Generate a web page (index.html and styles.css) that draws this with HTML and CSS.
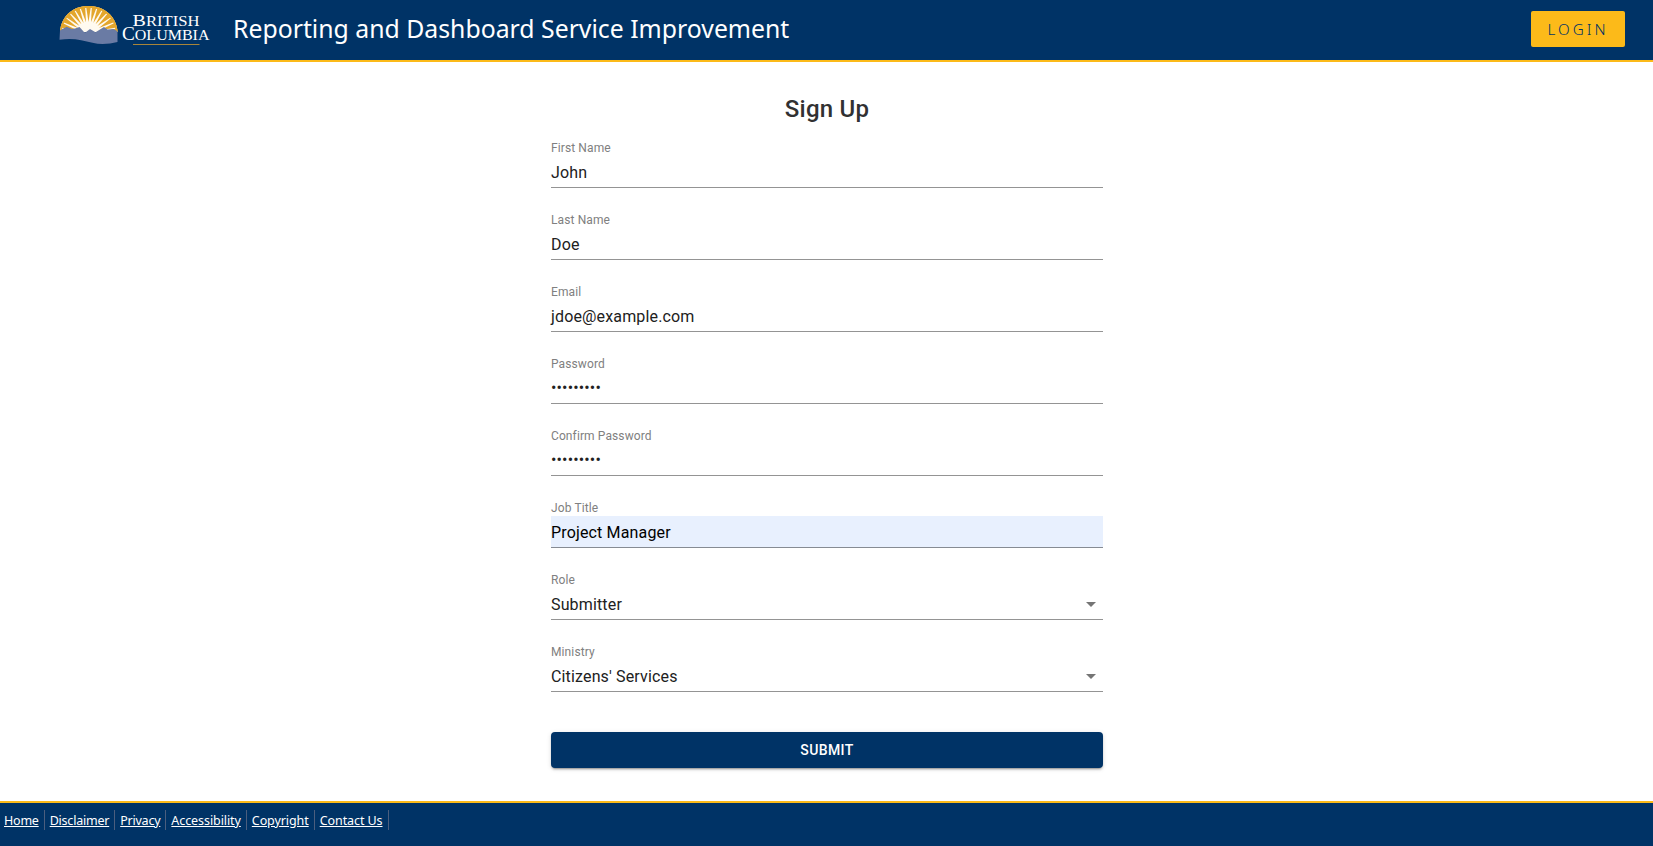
FILE: index.html
```
<!DOCTYPE html>
<html lang="en">
<head>
<meta charset="utf-8">
<title>Sign Up</title>
<link rel="stylesheet" href="styles.css">
</head>
<body>
<header class="header">
  <svg class="logo" width="154" height="44" viewBox="58 4 154 44" role="img" aria-label="British Columbia">
    <defs>
      <clipPath id="sun"><path d="M60 32C61 16 73 6 88.500 6s28 10 29 26z"/></clipPath>
      <path id="ray" d="M0-12L-3.100-32H3.100z"/>
    </defs>
    <g clip-path="url(#sun)">
      <rect x="59" y="5" width="60" height="30" fill="#fffaf0"/>
      <g transform="translate(88.500 34)" fill="#e3a62c">
        <use href="#ray" transform="rotate(-84)"/><use href="#ray" transform="rotate(-72)"/><use href="#ray" transform="rotate(-60)"/><use href="#ray" transform="rotate(-48)"/><use href="#ray" transform="rotate(-36)"/><use href="#ray" transform="rotate(-24)"/><use href="#ray" transform="rotate(-12)"/><use href="#ray"/><use href="#ray" transform="rotate(12)"/><use href="#ray" transform="rotate(24)"/><use href="#ray" transform="rotate(36)"/><use href="#ray" transform="rotate(48)"/><use href="#ray" transform="rotate(60)"/><use href="#ray" transform="rotate(72)"/><use href="#ray" transform="rotate(84)"/>
      </g>
      <path d="M60.500 32C61.500 17 73 6.500 88.500 6.500s27.500 10.500 28.500 25.500" fill="none" stroke="#e3a62c" stroke-width="2.500"/>
    </g>
    <path fill="#6a7ba4" d="M60 30.500l2.500-1.500 4.200-2.300L72 29l3-.5 4.500-1.500 4.500 5 1.700.3L90 29l5.500 3.300L104 27l3.500 2.500 6-.5 3.500 2 .5 1V42c-8 2-17 2.800-25 .8C82 40 72 37.500 59.500 39.800z"/>
    <g class="logo-text" fill="#fff">
      <text x="132.500" y="25.700" font-size="17.500" textLength="67" lengthAdjust="spacingAndGlyphs">B<tspan font-size="14.500">RITISH</tspan></text>
      <text x="122" y="40.200" font-size="18" textLength="87.500" lengthAdjust="spacingAndGlyphs">C<tspan font-size="15">OLUMBIA</tspan></text>
    </g>
    <path d="M133 44.500h66.500" stroke="#a88539"/>
  </svg>
  <h1 class="title">Reporting and Dashboard Service Improvement</h1>
  <button class="login">LOGIN</button>
</header>
<main class="main">
  <form class="form">
    <h2 class="heading">Sign Up</h2>
    <label class="field"><span class="label">First Name</span><span class="value">John</span></label>
    <label class="field"><span class="label">Last Name</span><span class="value">Doe</span></label>
    <label class="field"><span class="label">Email</span><span class="value">jdoe@example.com</span></label>
    <label class="field"><span class="label">Password</span><span class="value dots">•••••••••</span></label>
    <label class="field"><span class="label">Confirm Password</span><span class="value dots">•••••••••</span></label>
    <label class="field"><span class="label">Job Title</span><span class="value autofill">Project Manager</span></label>
    <label class="field"><span class="label">Role</span><span class="value">Submitter<svg class="arrow" viewBox="0 0 24 24"><path d="M7 10l5 5 5-5z"/></svg></span></label>
    <label class="field"><span class="label">Ministry</span><span class="value">Citizens' Services<svg class="arrow" viewBox="0 0 24 24"><path d="M7 10l5 5 5-5z"/></svg></span></label>
    <button class="submit" type="button">SUBMIT</button>
  </form>
</main>
<footer class="footer">
  <a href="#">Home</a><a href="#">Disclaimer</a><a href="#">Privacy</a><a class="wide" href="#">Accessibility</a><a class="wide" href="#">Copyright</a><a class="wide" href="#">Contact Us</a>
</footer>
</body>
</html>
```
FILE: styles.css
```
* { box-sizing: border-box; }
body {
  margin: 0;
  height: 846px;
  display: flex;
  flex-direction: column;
  background: #fff;
  font-family: Roboto, sans-serif;
  overflow: hidden;
}
.header {
  height: 62px;
  display: flex;
  align-items: flex-start;
  padding: 0 28px 0 58px;
  background: #003366;
  border-bottom: 2px solid #fcba19;
}
.logo { margin-top: 4px; flex: none; }
.logo-text { font-family: "Liberation Serif", serif; }
.title {
  margin: 10px 0 0 21px;
  font: 400 24.800px/36px "Noto Sans", sans-serif;
  color: #fff;
  white-space: nowrap;
}
.login {
  width: 94px;
  height: 36px;
  margin: 11px 0 0 auto;
  padding: 0;
  border: 0;
  border-radius: 2px;
  background: #fcba19;
  color: #003366;
  font: 300 15.200px/36px "Noto Sans", sans-serif;
  letter-spacing: 3px;
}
.main { flex: 1; display: flex; justify-content: center; padding-left: 1px; }
.form { width: 552px; display: flex; flex-direction: column; }
.heading {
  margin: 31px 0 15px;
  font-size: 24px;
  line-height: 32px;
  font-weight: 500;
  letter-spacing: 0.25px;
  text-align: center;
  color: #313132;
}
.field { height: 48px; margin-bottom: 24px; display: flex; flex-direction: column; }
.label {
  height: 16px;
  font-size: 12px;
  line-height: 16px;
  letter-spacing: 0.11px;
  color: #808080;
}
.value {
  height: 32px;
  padding-top: 1px;
  display: flex;
  align-items: center;
  justify-content: space-between;
  border-bottom: 1px solid #949494;
  font-size: 16px;
  letter-spacing: 0.15px;
  color: #212121;
}
.autofill { background: #e8f0fe; color: #000; border-bottom-color: #868b93; }
.dots { padding-top: 0; }
.arrow { width: 24px; height: 24px; margin-top: -1px; fill: #757575; }
.submit {
  height: 36px;
  margin-top: 16px;
  border: 0;
  border-radius: 4px;
  background: #003366;
  color: #fff;
  font: 500 14px/24px Roboto, sans-serif;
  letter-spacing: 0.4px;
  box-shadow: 0 3px 1px -2px rgba(0,0,0,.2), 0 2px 2px rgba(0,0,0,.14), 0 1px 5px rgba(0,0,0,.12);
}
.footer {
  height: 45px;
  display: flex;
  align-items: flex-start;
  padding-top: 7px;
  background: #003366;
  border-top: 2px solid #fcba19;
}
.footer a {
  height: 20px;
  padding: 0 5px 0 5px;
  border-right: 1px solid #4b5e7e;
  color: #fff;
  font: 12.500px/22px "Noto Sans", sans-serif;
  letter-spacing: -0.22px;
  white-space: nowrap;
}
.footer a:first-child { padding-left: 4px; }
.footer a.wide { letter-spacing: -0.08px; }
```
